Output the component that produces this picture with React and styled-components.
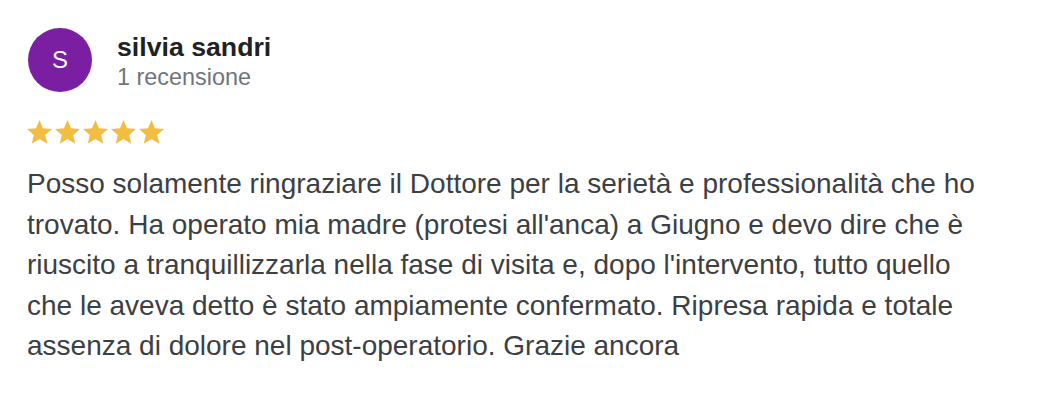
import React from "react";
import styled, { createGlobalStyle } from "styled-components";

const GlobalStyle = createGlobalStyle`
  html, body {
    margin: 0;
    padding: 0;
    background: #fff;
  }
  body {
    font-family: "Liberation Sans", Arial, Helvetica, sans-serif;
  }
`;

const Card = styled.div`
  width: 1038px;
  height: 402px;
  box-sizing: border-box;
  padding: 28px 28px 0 27px;
  background: #fff;
`;

const Header = styled.div`
  display: flex;
  align-items: flex-start;
  gap: 25px;
  padding-left: 1px;
`;

const Avatar = styled.div`
  width: 64px;
  height: 64px;
  border-radius: 50%;
  background: ${(p) => p.color};
  color: #fff;
  display: flex;
  align-items: center;
  justify-content: center;
  font-size: 24px;
  flex-shrink: 0;
`;

const Who = styled.div`
  display: flex;
  flex-direction: column;
  gap: 2px;
  margin-top: 4px;
`;

const Name = styled.div`
  font-size: 26.7px;
  font-weight: 700;
  color: #202124;
  line-height: 30px;
`;

const Count = styled.div`
  font-size: 23.4px;
  color: #70757a;
  line-height: 26px;
`;

const Stars = styled.div`
  display: flex;
  gap: 3px;
  margin-top: 28px;
`;

const Body = styled.div`
  margin-top: 20px;
  font-size: 28px;
  line-height: 40.5px;
  color: #3c4043;
`;

const Line = styled.span`
  display: block;
  white-space: nowrap;
`;

const Star = () => (
  <svg width="25" height="24" viewBox="2 2 20 19.2">
    <path
      fill="#f3bd41"
      d="M12 17.27L18.18 21l-1.64-7.03L22 9.24l-7.19-.61L12 2 9.19 8.63 2 9.24l5.46 4.73L5.820 21z"
    />
  </svg>
);

const review = {
  initial: "S",
  name: "silvia sandri",
  count: "1 recensione",
  rating: 5,
  lines: [
    "Posso solamente ringraziare il Dottore per la serietà e professionalità che ho",
    "trovato. Ha operato mia madre (protesi all'anca) a Giugno e devo dire che è",
    "riuscito a tranquillizzarla nella fase di visita e, dopo l'intervento, tutto quello",
    "che le aveva detto è stato ampiamente confermato. Ripresa rapida e totale",
    "assenza di dolore nel post-operatorio. Grazie ancora",
  ],
};

export default function App() {
  return (
    <>
      <GlobalStyle />
      <Card>
        <Header>
          <Avatar color="#7b1fa2">{review.initial}</Avatar>
          <Who>
            <Name>{review.name}</Name>
            <Count>{review.count}</Count>
          </Who>
        </Header>
        <Stars>
          {Array.from({ length: review.rating }).map((_, i) => (
            <Star key={i} />
          ))}
        </Stars>
        <Body>
          {review.lines.map((l, i) => (
            <Line key={i}>{l}</Line>
          ))}
        </Body>
      </Card>
    </>
  );
}
